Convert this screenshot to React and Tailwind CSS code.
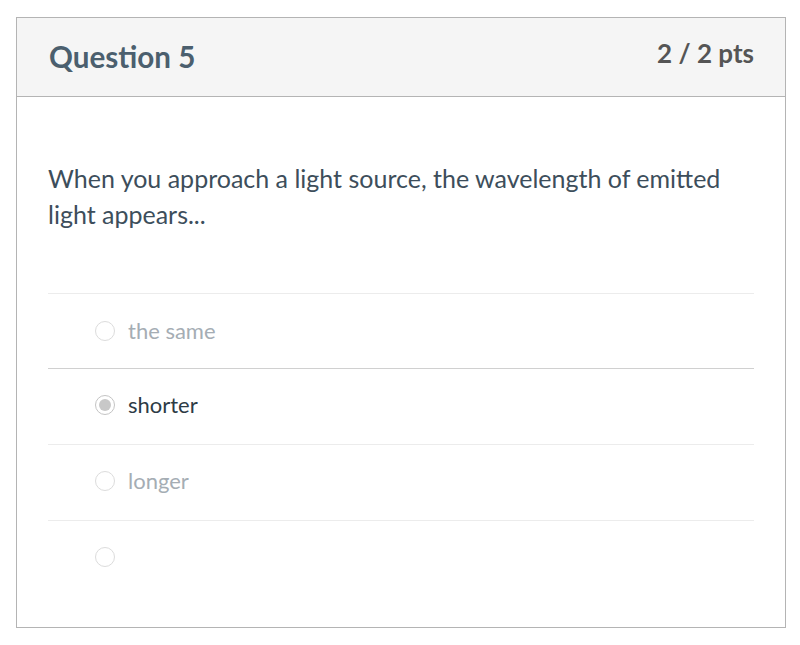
import React from "react";

function Radio({ checked }) {
  return (
    <span
      className={
        "flex h-[20px] w-[20px] shrink-0 items-center justify-center rounded-full border bg-white " +
        (checked ? "border-[#c4c4c4]" : "border-[#dcdcdc]")
      }
    >
      {checked ? <span className="h-[12px] w-[12px] rounded-full bg-[#c8c8c8]" /> : null}
    </span>
  );
}

function Answer({ label, checked, first, darkTop }) {
  return (
    <div
      className={
        "flex h-[76px] items-center gap-[13px] pl-[47px] pb-[4px] " +
        (first ? "" : "border-t ") +
        (darkTop ? "border-[#d0d0d0]" : "border-[#ececec]")
      }
    >
      <Radio checked={checked} />
      <span className={"text-[22px] " + (checked ? "text-[#2d3b45]" : "text-[#a5adb4]")}>{label}</span>
    </div>
  );
}

export default function App() {
  return (
    <div className="min-h-[645px] bg-white pl-[16px] pt-[17px]" style={{ fontFamily: "Lato, 'Noto Sans', sans-serif" }}>
      <div className="w-[770px] h-[611px] border border-[#b4b4b4]">
        <div className="flex h-[79px] items-start justify-between border-b border-[#b4b4b4] bg-[#f5f5f5] pl-[32px] pr-[31px]">
          <h2 className="mt-[19px] text-[29.6px] leading-[40px] font-bold text-[#4b5f6e]">Question 5</h2>
          <div className="mt-[17px] text-[26px] leading-[36px] font-bold text-[#555555]">2 / 2 pts</div>
        </div>
        <div className="px-[31px]">
          <p className="mt-[63px] text-[25px] leading-[36px] text-[#3d4e5b]">
            When you approach a light source, the wavelength of emitted light appears...
          </p>
          <div className="mt-[61px] border-t border-[#ececec]">
            <div className="flex h-[74px] items-center gap-[13px] pl-[47px] pb-[1px]">
              <Radio />
              <span className="text-[22px] text-[#a5adb4]">the same</span>
            </div>
            <Answer label="shorter" checked darkTop />
            <Answer label="longer" />
            <Answer label="" />
          </div>
        </div>
      </div>
    </div>
  );
}
